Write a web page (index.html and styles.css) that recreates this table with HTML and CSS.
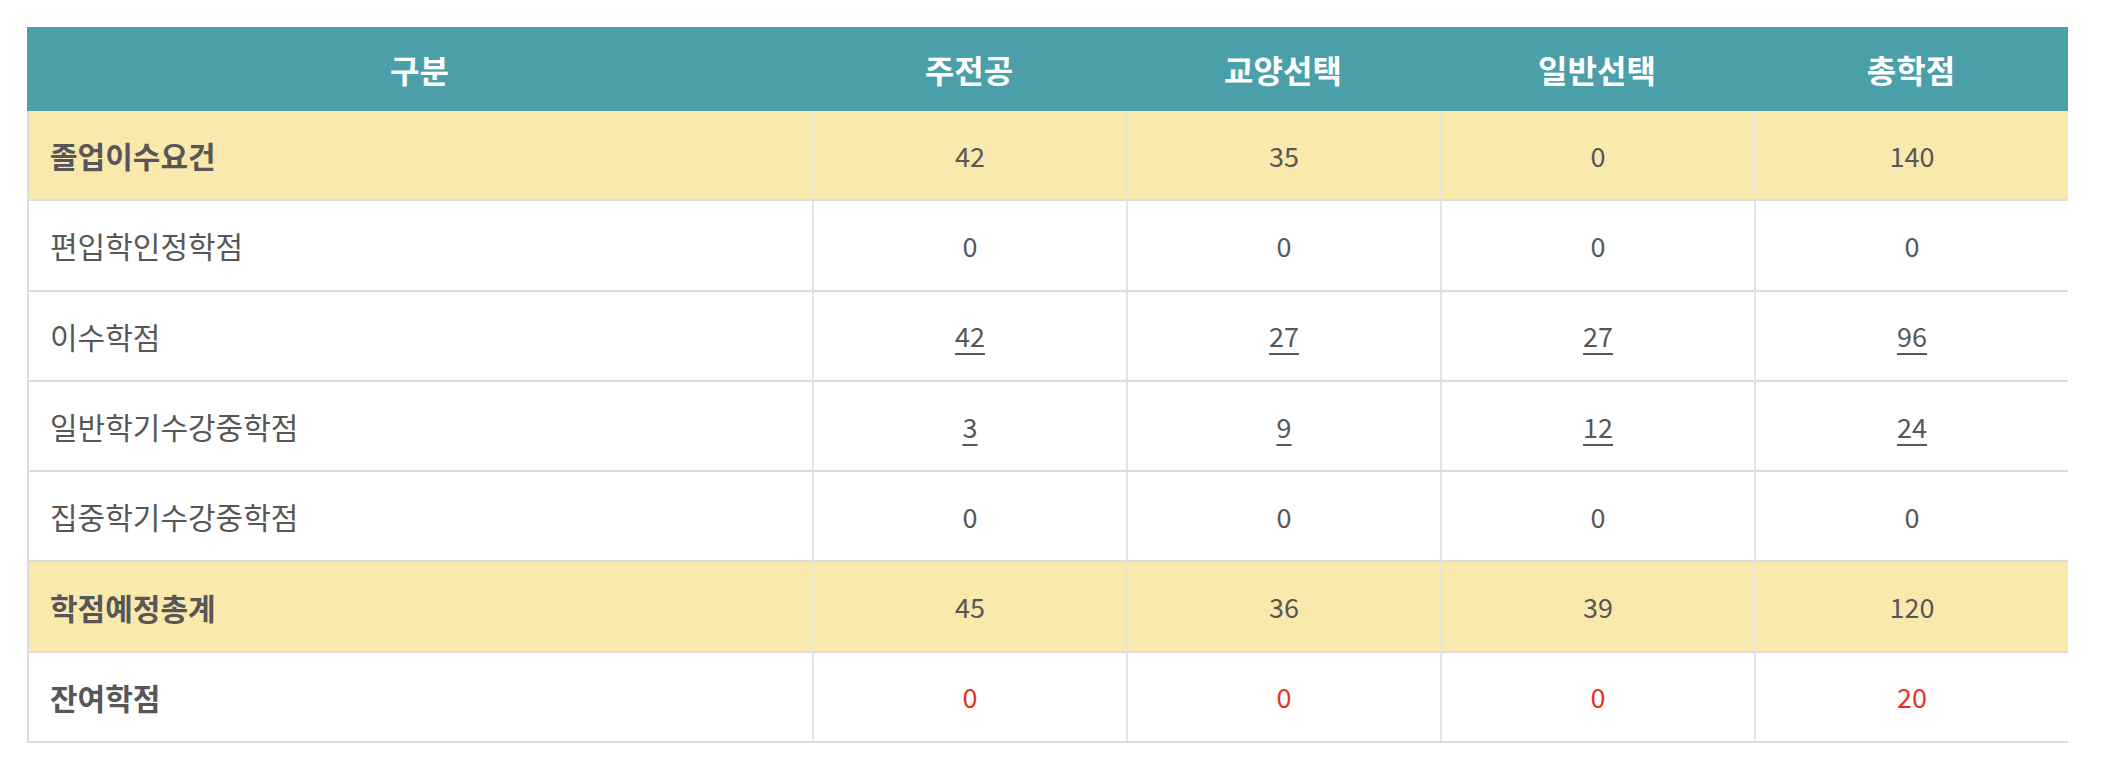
FILE: index.html
```html
<!DOCTYPE html>
<html>
<head>
  <title>학점 이수 현황</title>
  <meta name="viewport" content="width=device-width, initial-scale=1">
  <link rel="stylesheet" href="styles.css">
</head>
<body>
  <div class="wrap">
    <table class="credits">
      <colgroup>
        <col class="col-name">
        <col class="col-num">
        <col class="col-num">
        <col class="col-num">
        <col class="col-num">
      </colgroup>
      <thead>
        <tr>
          <th>구분</th>
          <th>주전공</th>
          <th>교양선택</th>
          <th>일반선택</th>
          <th>총학점</th>
        </tr>
      </thead>
      <tbody>
        <tr class="sum">
          <td class="name bold">졸업이수요건</td>
          <td>42</td><td>35</td><td>0</td><td>140</td>
        </tr>
        <tr>
          <td class="name">편입학인정학점</td>
          <td>0</td><td>0</td><td>0</td><td>0</td>
        </tr>
        <tr>
          <td class="name">이수학점</td>
          <td><a href="#">42</a></td><td><a href="#">27</a></td><td><a href="#">27</a></td><td><a href="#">96</a></td>
        </tr>
        <tr>
          <td class="name">일반학기수강중학점</td>
          <td><a href="#">3</a></td><td><a href="#">9</a></td><td><a href="#">12</a></td><td><a href="#">24</a></td>
        </tr>
        <tr>
          <td class="name">집중학기수강중학점</td>
          <td>0</td><td>0</td><td>0</td><td>0</td>
        </tr>
        <tr class="sum">
          <td class="name bold">학점예정총계</td>
          <td>45</td><td>36</td><td>39</td><td>120</td>
        </tr>
        <tr class="remain">
          <td class="name bold">잔여학점</td>
          <td>0</td><td>0</td><td>0</td><td>20</td>
        </tr>
      </tbody>
    </table>
  </div>
</body>
</html>
```

FILE: styles.css
```css
body { margin: 0; background: #fff; font-family: "Noto Sans CJK KR", "Noto Sans", sans-serif; color: #575757; }
.wrap { padding: 27px 0 0 27px; }

.credits { width: 2041px; table-layout: fixed; border-collapse: separate; border-spacing: 0; }
.col-name { width: 785px; }
.col-num { width: 314px; }

.credits th { height: 84px; padding: 0; background: #4a9fa8; color: #fff; font-size: 32px; font-weight: bold; text-align: center; }
.credits td { height: 88.3px; padding: 0; font-size: 27px; text-align: center; vertical-align: middle; border-bottom: 2px solid #dcdcdc; border-left: 2px solid #e4e4e4; }
.credits td:first-child { border-left-color: #dcdcdc; }
.credits td.name { text-align: left; padding-left: 21px; font-size: 30px; }
.credits td.bold { font-weight: bold; }

.credits a { color: #575757; text-decoration: underline; text-decoration-thickness: 2px; text-underline-offset: 6px; }

.sum td { background: #fae9ad; }
.remain td + td { color: #e8321f; }
```
